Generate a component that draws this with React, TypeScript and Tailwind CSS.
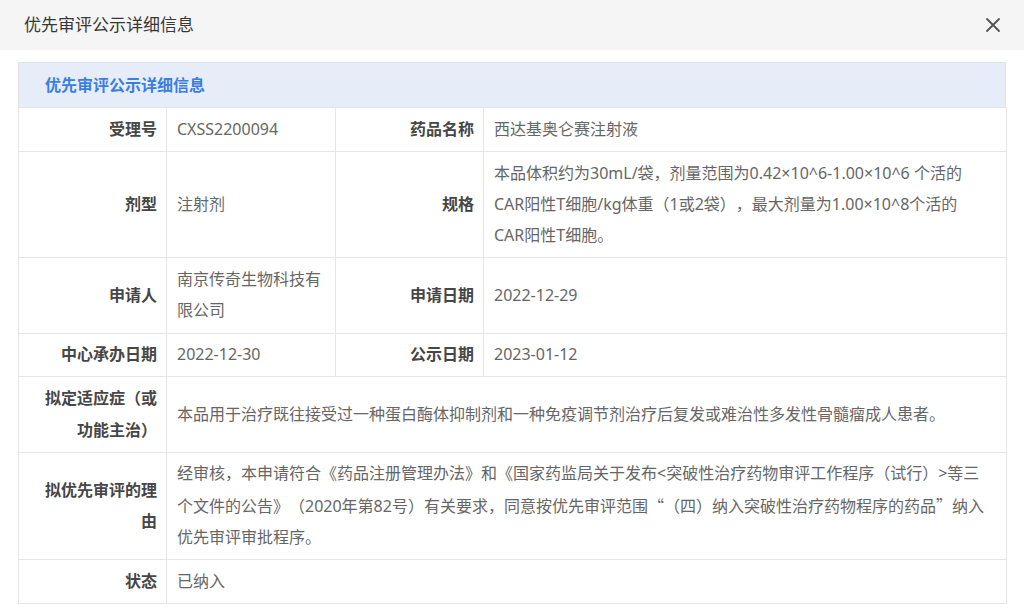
import React from "react";

const Label = ({ children }: { children: React.ReactNode }) => (
  <td className="border border-[#e6e6e6] pl-[20px] pr-[9px] py-[5.8px] text-right align-middle font-bold text-[#464646]">
    {children}
  </td>
);

const Value = ({ children, span }: { children: React.ReactNode; span?: number }) => (
  <td colSpan={span} className="border border-[#e6e6e6] pl-[10px] pr-[10px] py-[5.8px] text-left align-middle text-[#666]">
    {children}
  </td>
);

const Q = ({ children }: { children: React.ReactNode }) => (
  <span className="font-['Noto_Sans_CJK_SC',sans-serif]">{children}</span>
);

export default function App() {
  return (
    <div className="w-[1024px] h-[614px] bg-white font-['Noto_Sans','Noto_Sans_CJK_SC',sans-serif] overflow-hidden">
      <div className="h-[50px] bg-[#f5f5f5] flex items-center justify-between pl-[24px] pr-[22px]">
        <span className="text-[17px] text-[#383838]">优先审评公示详细信息</span>
        <svg width="16" height="16" viewBox="0 0 16 16" className="mr-[1px]">
          <path d="M2 2 L14 14 M14 2 L2 14" stroke="#555" strokeWidth="1.8" strokeLinecap="round" />
        </svg>
      </div>
      <div className="px-[18px] pt-[12px]">
        <div className="border border-[#e2e2e2] border-b-0 bg-[#e6edf8] h-[45px] flex items-center pl-[26px]">
          <span className="text-[16px] font-bold text-[#3b7ee0]">优先审评公示详细信息</span>
        </div>
        <table className="w-[988px] border-collapse table-fixed text-[16px] leading-[31.3px] [text-spacing-trim:space-all]">
          <colgroup>
            <col className="w-[148px]" />
            <col className="w-[169px]" />
            <col className="w-[148px]" />
            <col className="w-[523px]" />
          </colgroup>
          <tbody>
            <tr>
              <Label>受理号</Label>
              <Value>CXSS2200094</Value>
              <Label>药品名称</Label>
              <Value>西达基奥仑赛注射液</Value>
            </tr>
            <tr>
              <Label>剂型</Label>
              <Value>注射剂</Value>
              <Label>规格</Label>
              <Value>
                <span className="whitespace-nowrap">本品体积约为30mL/袋，剂量范围为0.42×10^6-1.00×10^6 个活的</span>
                <br />
                <span className="whitespace-nowrap">CAR阳性T细胞/kg体重（1或2袋），最大剂量为1.00×10^8个活的</span>
                <br />
                CAR阳性T细胞。
              </Value>
            </tr>
            <tr>
              <Label>申请人</Label>
              <Value>
                南京传奇生物科技有
                <br />
                限公司
              </Value>
              <Label>申请日期</Label>
              <Value>2022-12-29</Value>
            </tr>
            <tr>
              <Label>中心承办日期</Label>
              <Value>2022-12-30</Value>
              <Label>公示日期</Label>
              <Value>2023-01-12</Value>
            </tr>
            <tr>
              <Label>
                拟定适应症（或
                <br />
                功能主治）
              </Label>
              <Value span={3}>
                本品用于治疗既往接受过一种蛋白酶体抑制剂和一种免疫调节剂治疗后复发或难治性多发性骨髓瘤成人患者。
              </Value>
            </tr>
            <tr>
              <Label>
                拟优先审评的理
                <br />
                由
              </Label>
              <Value span={3}>
                <span className="whitespace-nowrap">经审核，本申请符合《药品注册管理办法》和《国家药监局关于发布&lt;突破性治疗药物审评工作程序（试行）&gt;等三</span>
                <br />
                <span className="whitespace-nowrap">
                  个文件的公告》（2020年第82号）有关要求，同意按优先审评范围<Q>“</Q>（四）纳入突破性治疗药物程序的药品<Q>”</Q>纳入
                </span>
                <br />
                优先审评审批程序。
              </Value>
            </tr>
            <tr>
              <Label>状态</Label>
              <Value span={3}>已纳入</Value>
            </tr>
          </tbody>
        </table>
      </div>
    </div>
  );
}
